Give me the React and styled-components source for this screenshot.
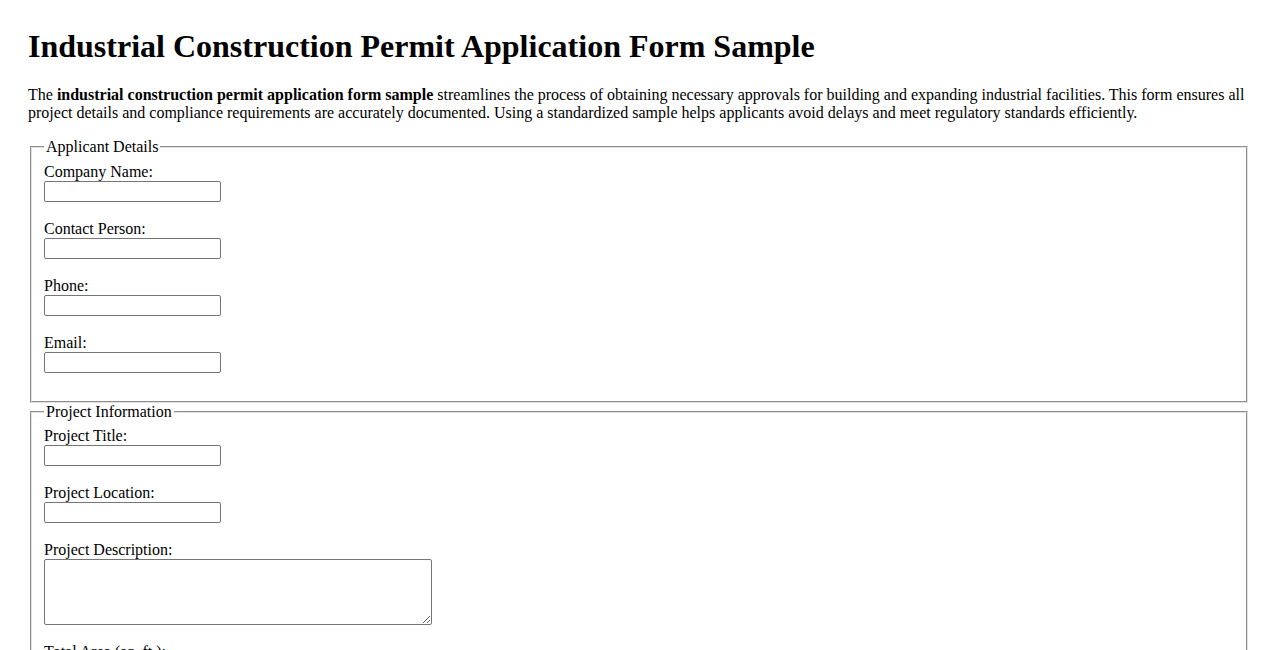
import React from 'react';
import styled, { createGlobalStyle } from 'styled-components';

const GlobalStyle = createGlobalStyle`
  body {
    margin: 28px;
    font-family: "Liberation Serif", "Times New Roman", serif;
    font-size: 16px;
    color: #000;
    background: #fff;
  }
`;

const Title = styled.h1`
  font-size: 32px;
  font-weight: bold;
  margin: 0 0 21px;
  line-height: 37px;
`;

const Intro = styled.p`
  margin: 16px 0;
  line-height: 18px;
`;

const Section = styled.fieldset`
  margin: 0 2px;
  padding: 6.6px 12px 10px;
  border: 2px groove #e2e2e2;
`;

const Legend = styled.legend`
  padding: 0 2px;
  line-height: 18px;
`;

const Field = styled.div`
  display: flex;
  flex-direction: column;
  align-items: flex-start;
  margin-bottom: 18px;
`;

const Label = styled.label`
  line-height: 18px;
`;

const TextInput = styled.input`
  box-sizing: border-box;
  width: 177px;
  height: 21px;
  border: 1px solid #767676;
  border-radius: 2px;
  padding: 1px 2px;
  font-family: "Liberation Sans", Arial, sans-serif;
  font-size: 13px;
`;

const TextArea = styled.textarea`
  box-sizing: border-box;
  width: 388px;
  height: 66px;
  border: 1px solid #767676;
  border-radius: 2px;
  padding: 2px;
  font-family: "Liberation Mono", monospace;
  font-size: 13px;
`;

const applicant = [
  ['company', 'Company Name:'],
  ['contact', 'Contact Person:'],
  ['phone', 'Phone:'],
  ['email', 'Email:'],
];

const project = [
  ['title', 'Project Title:', 'input'],
  ['location', 'Project Location:', 'input'],
  ['description', 'Project Description:', 'textarea'],
  ['area', 'Total Area (sq. ft.):', 'input'],
  ['cost', 'Estimated Cost:', 'input'],
];

export default function App() {
  return (
    <>
      <GlobalStyle />
      <Title>Industrial Construction Permit Application Form Sample</Title>
      <Intro>
        The <b>industrial construction permit application form sample</b> streamlines the process of obtaining necessary approvals for building and expanding industrial facilities. This form ensures all project details and compliance requirements are accurately documented. Using a standardized sample helps applicants avoid delays and meet regulatory standards efficiently.
      </Intro>
      <form>
        <Section>
          <Legend>Applicant Details</Legend>
          {applicant.map(([id, text]) => (
            <Field key={id}>
              <Label htmlFor={id}>{text}</Label>
              <TextInput id={id} type="text" />
            </Field>
          ))}
        </Section>
        <Section>
          <Legend>Project Information</Legend>
          {project.map(([id, text, kind]) => (
            <Field key={id}>
              <Label htmlFor={id}>{text}</Label>
              {kind === 'textarea' ? <TextArea id={id} /> : <TextInput id={id} type="text" />}
            </Field>
          ))}
        </Section>
      </form>
    </>
  );
}
